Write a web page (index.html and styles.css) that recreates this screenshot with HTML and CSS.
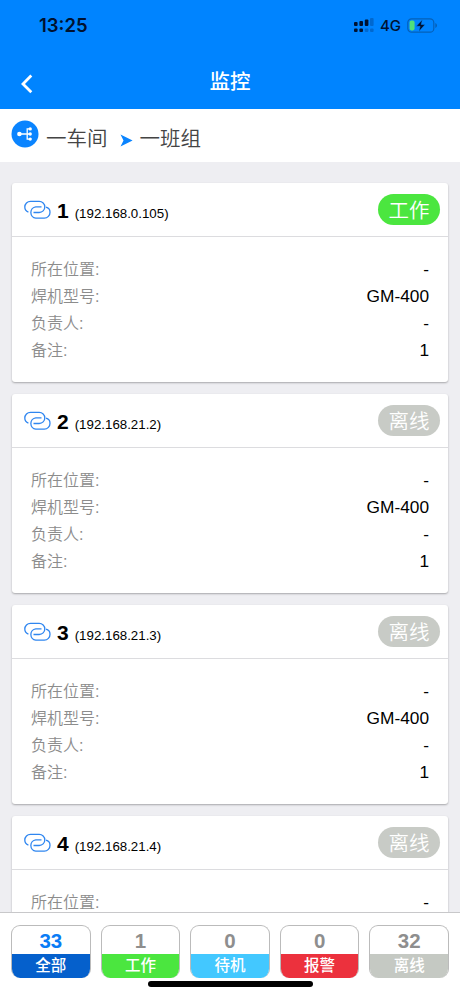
FILE: index.html
```html
<!DOCTYPE html>
<html lang="zh-CN">
<head>
<meta charset="UTF-8">
<meta name="viewport" content="width=device-width, initial-scale=1.0">
<title>监控</title>
<link rel="stylesheet" href="styles.css">
</head>
<body>
<svg class="defs" width="0" height="0">
  <symbol id="icon-link" viewBox="0 0 27 19">
    <path d="M4.400 12.100C2 11.200.8 9.300.8 7A5.700 5.700 0 0 1 6.500 1.300h8.700a5.600 5.600 0 0 1 0 11.200H9.500"/>
    <path d="M22 7.200c2.600.7 4 2.600 4 5a5.700 5.700 0 0 1-5.700 5.900h-8.500a5.700 5.700 0 0 1 0-11.300h5.700"/>
  </symbol>
</svg>

<div class="app">
  <header class="header">
    <div class="status-bar">
      <span class="time">13:25</span>
      <div class="status-icons">
        <svg class="signal" width="20" height="15" viewBox="0 0 20 15">
          <g fill="#001230">
            <rect x="0" y="4" width="3.600" height="4" rx="1"/>
            <rect x="5.400" y="3" width="3.600" height="5" rx="1"/>
            <rect x="10.800" y="1.500" width="3.600" height="6.500" rx="1"/>
            <rect x="0" y="10.500" width="3.600" height="3.600" rx="1"/>
            <rect x="5.400" y="10.500" width="3.600" height="3.600" rx="1"/>
          </g>
          <g fill="#0068cf">
            <rect x="16" y="0" width="3.600" height="8" rx="1"/>
            <rect x="10.800" y="10.500" width="3.600" height="3.600" rx="1"/>
            <rect x="16" y="10.500" width="3.600" height="3.600" rx="1"/>
          </g>
        </svg>
        <span class="network">4G</span>
        <svg class="battery" width="30" height="15" viewBox="0 0 30 15">
          <rect x=".8" y=".8" width="26" height="13.400" rx="3.800" fill="none" stroke="#0560b8" stroke-width="1.200"/>
          <path d="M28.300 5v5c1-.4 1.700-1.300 1.700-2.500S29.300 5.400 28.300 5z" fill="#0560b8"/>
          <rect x="2.600" y="2.600" width="5" height="9.800" rx="1.800" fill="#4fe07c"/>
          <path d="M15.400 1.500L9.300 8.300h3.800l-1.200 5.200 6.200-7h-3.900z" fill="#001230" stroke="#0084ff" stroke-width=".5"/>
        </svg>
      </div>
    </div>
    <div class="nav-bar">
      <svg class="back" width="12" height="20" viewBox="0 0 12 20"><path d="M10.300 1.600L2 9.900l8.300 8.300"/></svg>
      <h1>监控</h1>
    </div>
  </header>

  <nav class="crumbs">
    <svg class="tree" width="28" height="28" viewBox="0 0 28 28">
      <circle cx="14" cy="14" r="13.500" fill="#0a84ff"/>
      <path d="M9 14h6.500M19 8.800h-2.800v10.400H19M16.200 14H19" fill="none" stroke="#fff" stroke-width="1.300"/>
      <g fill="#fff">
        <circle cx="8.400" cy="14" r="2.300"/>
        <circle cx="19.200" cy="8.900" r="1.700"/>
        <circle cx="19.200" cy="14" r="1.700"/>
        <circle cx="19.200" cy="19.100" r="1.700"/>
      </g>
    </svg>
    <span>一车间</span>
    <svg class="arrow" width="13" height="13" viewBox="0 0 13 13"><path d="M.5.500L12.600 6.500.5 12.500l3-6z" fill="#0a84ff"/></svg>
    <span>一班组</span>
  </nav>

  <main class="list">
    <section class="card">
      <div class="card-head">
        <svg class="link"><use href="#icon-link"/></svg>
        <b>1</b><span class="ip">(192.168.0.105)</span>
        <span class="badge working">工作</span>
      </div>
      <dl class="card-body">
        <div><dt>所在位置:</dt><dd>-</dd></div>
        <div><dt>焊机型号:</dt><dd>GM-400</dd></div>
        <div><dt>负责人:</dt><dd>-</dd></div>
        <div><dt>备注:</dt><dd>1</dd></div>
      </dl>
    </section>

    <section class="card">
      <div class="card-head">
        <svg class="link"><use href="#icon-link"/></svg>
        <b>2</b><span class="ip">(192.168.21.2)</span>
        <span class="badge">离线</span>
      </div>
      <dl class="card-body">
        <div><dt>所在位置:</dt><dd>-</dd></div>
        <div><dt>焊机型号:</dt><dd>GM-400</dd></div>
        <div><dt>负责人:</dt><dd>-</dd></div>
        <div><dt>备注:</dt><dd>1</dd></div>
      </dl>
    </section>

    <section class="card">
      <div class="card-head">
        <svg class="link"><use href="#icon-link"/></svg>
        <b>3</b><span class="ip">(192.168.21.3)</span>
        <span class="badge">离线</span>
      </div>
      <dl class="card-body">
        <div><dt>所在位置:</dt><dd>-</dd></div>
        <div><dt>焊机型号:</dt><dd>GM-400</dd></div>
        <div><dt>负责人:</dt><dd>-</dd></div>
        <div><dt>备注:</dt><dd>1</dd></div>
      </dl>
    </section>

    <section class="card">
      <div class="card-head">
        <svg class="link"><use href="#icon-link"/></svg>
        <b>4</b><span class="ip">(192.168.21.4)</span>
        <span class="badge">离线</span>
      </div>
      <dl class="card-body">
        <div><dt>所在位置:</dt><dd>-</dd></div>
      </dl>
    </section>
  </main>

  <footer class="footer">
    <div class="tabs">
      <div class="tab all"><b>33</b><span>全部</span></div>
      <div class="tab working"><b>1</b><span>工作</span></div>
      <div class="tab standby"><b>0</b><span>待机</span></div>
      <div class="tab alarm"><b>0</b><span>报警</span></div>
      <div class="tab offline"><b>32</b><span>离线</span></div>
    </div>
    <div class="home-indicator"></div>
  </footer>
</div>
</body>
</html>
```

FILE: styles.css
```css
* {
  box-sizing: border-box;
}
body {
  margin: 0;
  font-family: "Liberation Sans", "Noto Sans CJK SC", sans-serif;
  color: #000;
  background: #eeeef2;
}
svg {
  display: block;
  flex: none;
}
.defs {
  display: none;
}
.app {
  display: flex;
  flex-direction: column;
  width: 460px;
  height: 996px;
  overflow: hidden;
}

/* header */
.header {
  flex: none;
  height: 109px;
  background: #0084ff;
}
.status-bar {
  display: flex;
  justify-content: space-between;
  align-items: center;
  height: 50px;
  padding: 0 23px 0 39px;
  color: #001230;
  font-family: Inter, sans-serif;
}
.time {
  font-size: 18.500px;
  font-weight: 600;
}
.status-icons {
  display: flex;
  align-items: center;
}
.network {
  margin: 0 6px 0 6px;
  font-size: 15px;
  font-weight: 500;
}
.nav-bar {
  display: grid;
  grid-template-columns: 60px 1fr 60px;
  align-items: center;
  height: 59px;
  padding-top: 5px;
}
.back {
  margin: 3px 0 0 21px;
  fill: none;
  stroke: #fff;
  stroke-width: 2.800;
}
.nav-bar h1 {
  margin: 0;
  color: #fff;
  font-size: 20.500px;
  font-weight: 500;
  line-height: 30px;
  text-align: center;
}

/* breadcrumb */
.crumbs {
  flex: none;
  display: flex;
  align-items: center;
  height: 53px;
  padding-left: 11px;
  background: #fff;
  color: #444;
  font-size: 20.500px;
  font-weight: 350;
  line-height: 30px;
}
.crumbs span {
  padding-top: 6px;
}
.tree {
  margin: 0 7px 3px 0;
}
.arrow {
  margin: 9px 7px 0 12px;
}

/* cards */
.list {
  flex: 1;
  min-height: 0;
  overflow: hidden;
  padding: 21px 12px 0;
}
.card {
  height: 199px;
  margin-bottom: 12px;
  background: #fff;
  border-radius: 3px;
  box-shadow: 0 1px 2px rgba(0, 0, 0, .3);
}
.card-head {
  display: flex;
  align-items: center;
  height: 54px;
  padding: 0 8px 0 12px;
  border-bottom: 1px solid #dcdcdf;
}
.link {
  width: 27px;
  height: 19px;
  fill: none;
  stroke: #2f86f0;
  stroke-width: 1.300;
}
.card-head b {
  margin: 3px 6px 0 6px;
  font-size: 21px;
  line-height: 24px;
}
.ip {
  padding-top: 8px;
  font-size: 13.300px;
  line-height: 16px;
}
.badge {
  width: 62px;
  height: 31px;
  margin-left: auto;
  border-radius: 16px;
  background: #c8cbc6;
  color: #fff;
  font-size: 20.500px;
  font-weight: 350;
  line-height: 33px;
  text-align: center;
}
.badge.working {
  background: #4be63f;
}
.card-body {
  margin: 0;
  padding: 19px 19px 0 19px;
}
.card-body div {
  display: flex;
  justify-content: space-between;
  height: 27px;
  line-height: 27px;
}
.card-body dt {
  color: #8c8c8c;
  font-size: 16px;
  font-weight: 350;
}
.card-body dd {
  margin: 0;
  font-size: 17.300px;
}

/* bottom filter */
.footer {
  flex: none;
  height: 84px;
  padding: 12px 11px 0;
  border-top: 1px solid #c8c8ca;
  background: #fff;
}
.tabs {
  display: grid;
  grid-template-columns: repeat(5, 1fr);
  gap: 10px;
}
.tab {
  height: 53px;
  border: 1px solid #bbb;
  border-bottom: 0;
  border-radius: 9px;
  text-align: center;
  overflow: hidden;
  background: #fff;
}
.tab b {
  display: block;
  height: 28px;
  color: #8e8e8e;
  font-size: 20.500px;
  line-height: 30px;
}
.tab span {
  display: block;
  height: 25px;
  margin: 0 -1px;
  background: #c5c9c3;
  color: #fff;
  font-size: 15.500px;
  font-weight: 500;
  line-height: 24px;
}
.tab.all b {
  color: #0a7cf5;
}
.tab.all span {
  background: #0560cc;
}
.tab.working span {
  background: #4be63f;
}
.tab.standby span {
  background: #43c8ff;
}
.tab.alarm span {
  background: #ec313d;
}
.home-indicator {
  width: 165px;
  height: 6px;
  margin: 3px auto 0;
  border-radius: 3px;
  background: #000;
}
```
